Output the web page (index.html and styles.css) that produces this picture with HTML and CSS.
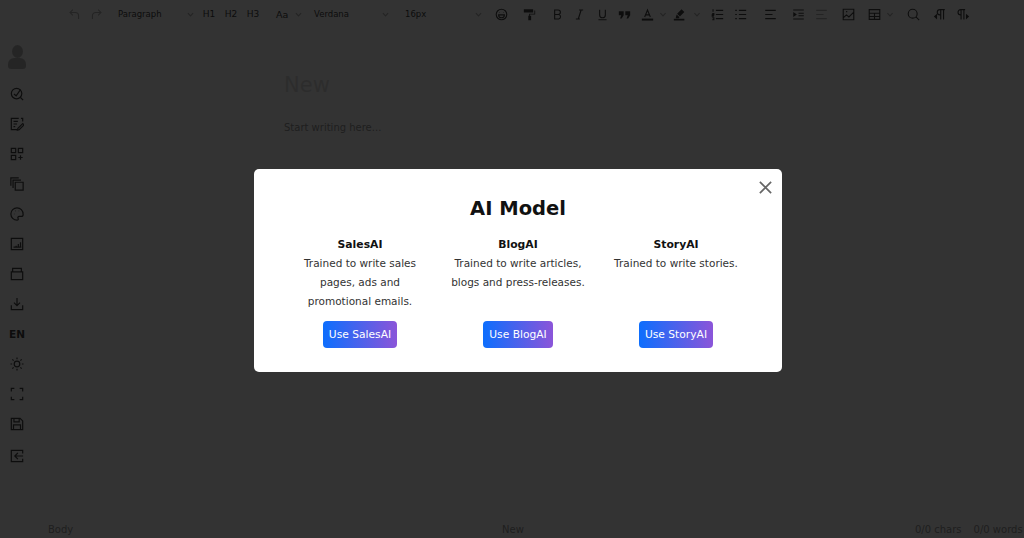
FILE: index.html
```html
<!DOCTYPE html>
<html lang="en">
<head>
  <meta charset="UTF-8">
  <meta name="viewport" content="width=device-width, initial-scale=1.0">
  <title>AI Editor</title>
  <link rel="stylesheet" href="styles.css">
</head>
<body>
  <!-- Icon sprite -->
  <svg class="sprite" xmlns="http://www.w3.org/2000/svg">
    <symbol id="i-undo" viewBox="0 0 16 16"><path d="M6 2 2.500 5.500 6 9M3 5.500h6a4 4 0 0 1 4 4v4"/></symbol>
    <symbol id="i-redo" viewBox="0 0 16 16"><path d="M10 2l3.500 3.500L10 9M13 5.500H7a4 4 0 0 0-4 4v4"/></symbol>
    <symbol id="i-chev" viewBox="0 0 8 8"><path d="M1 2.500 4 5.500 7 2.500"/></symbol>
    <symbol id="i-smile" viewBox="0 0 16 16"><circle cx="8" cy="8" r="6.500"/><path d="M4.500 8.500a3.500 3.500 0 0 0 7 0zM5.500 5.500h.5M10 5.500h.5"/></symbol>
    <symbol id="i-paint" viewBox="0 0 16 16"><path class="fill" d="M1 1.500h11.500v4H1zM13.500 3H15v5H8.500v1.500H10V15H6.500V9.500H7.500V7h6.500V3z"/></symbol>
    <symbol id="i-bold" viewBox="0 0 16 16"><path d="M4.500 2.500h4.300a2.700 2.700 0 0 1 0 5.500H4.500zM4.500 8h5a2.800 2.800 0 0 1 0 5.500h-5z"/></symbol>
    <symbol id="i-italic" viewBox="0 0 16 16"><path d="M10 2.500 6.500 13.500M7.500 2.500h5M3.500 13.500h5"/></symbol>
    <symbol id="i-under" viewBox="0 0 16 16"><path d="M4.500 2v6.500a3.500 3.500 0 0 0 7 0V2M3 14.500h10"/></symbol>
    <symbol id="i-quote" viewBox="0 0 16 16"><path class="fill" d="M1 4h6v5l-2.500 4H2.500L4 9H1zM9 4h6v5l-2.500 4h-2L12 9H9z"/></symbol>
    <symbol id="i-color" viewBox="0 0 16 16"><path d="M4.500 11 8 2.500 11.500 11M5.500 8.500h5"/><path class="fill" d="M1 13h14v2.500H1z"/></symbol>
    <symbol id="i-mark" viewBox="0 0 16 16"><path class="fill" d="M10.500 1.500 14 5l-5.500 5.500-3.500-3.500zM4.500 8 8 11.500l-1 1H3.500v-1.500zM1 13.200h13v2.300H1z"/></symbol>
    <symbol id="i-ol" viewBox="0 0 16 16"><path d="M6 3h9M6 8h9M6 13h9M2.500 1.500v3M1.500 7h2v1.500h-2V10h2M1.500 12h2v2.500h-2"/></symbol>
    <symbol id="i-ul" viewBox="0 0 16 16"><path d="M6 3h9M6 8h9M6 13h9M1.500 3h2M1.500 8h2M1.500 13h2"/></symbol>
    <symbol id="i-align" viewBox="0 0 16 16"><path d="M1.500 3h13M1.500 8h9M1.500 13h13"/></symbol>
    <symbol id="i-indent" viewBox="0 0 16 16"><path d="M1.500 2.500h13M8 6.500h6.500M8 9.500h6.500M1.500 13.500h13"/><path class="fill" d="M1.500 5 6 8l-4.500 3z"/></symbol>
    <symbol id="i-image" viewBox="0 0 16 16"><path d="M1.500 1.500h13v13h-13zM1.500 12l4-3.500 3 2.500 6-6M5 4.500h1.500"/></symbol>
    <symbol id="i-table" viewBox="0 0 16 16"><path d="M1.500 2h13v12h-13zM1.500 6.500h13M8 6.500V14M1.500 10.500h13"/></symbol>
    <symbol id="i-search" viewBox="0 0 16 16"><circle cx="7" cy="7" r="5.500"/><path d="M11 11l4 4"/></symbol>
    <symbol id="i-ltr" viewBox="0 0 16 16"><path d="M9.500 14V2M13 14V2M14.500 2H8.500a3 3 0 0 0 0 6.500h1"/><path class="fill" d="M1 10.500 5 7v7z"/></symbol>
    <symbol id="i-rtl" viewBox="0 0 16 16"><path d="M5 14V2M8.500 14V2M10 2H4.500a3 3 0 0 0 0 6.500H5"/><path class="fill" d="M15 10.500 11 7v7z"/></symbol>
    <symbol id="i-audit" viewBox="0 0 16 16"><circle cx="7.500" cy="7.500" r="6"/><path d="M12 12l3 3M4.500 8 7 10l5-7"/></symbol>
    <symbol id="i-note" viewBox="0 0 16 16"><path d="M10 1.500H1.500v13H8M14.500 5V1.500H12.500M4 5h5M4 8h4M4 11h2"/><path d="M14.500 7.500 9 13l-.5 2 2-.5 5.500-5.500z"/></symbol>
    <symbol id="i-apps" viewBox="0 0 16 16"><path d="M1.500 1.500h5v5h-5zM9.500 1.500h5v5h-5zM1.500 9.500h5v5h-5zM12 9.500v5M9.500 12h5"/></symbol>
    <symbol id="i-copy" viewBox="0 0 16 16"><path d="M6 6h9v9H6zM3.500 12.500V3.500h9M1 10V1h9"/></symbol>
    <symbol id="i-palette" viewBox="0 0 16 16"><path d="M8 1a7 7 0 1 0 0 14c1.500 0 1.800-1.200 1.200-2-.7-1 0-2.200 1.300-2.200H13c1.200 0 2-1 2-2.300C15 4 12 1 8 1z"/><path d="M4.500 8h.5M6 4.500h.5M10 4.500h.5"/></symbol>
    <symbol id="i-chart" viewBox="0 0 16 16"><path d="M1.500 1.500h13v13h-13zM7 11.500V10M9.500 11.500V8M12 11.500V6M4 11.500h9"/></symbol>
    <symbol id="i-box" viewBox="0 0 16 16"><path d="M1.500 5.500h13v9h-13zM3 5.500V1.500h10v4"/></symbol>
    <symbol id="i-down" viewBox="0 0 16 16"><path d="M8 1v9M4.500 6.500 8 10l3.500-3.500M1.500 9.500v5h13v-5"/></symbol>
    <symbol id="i-sun" viewBox="0 0 16 16"><circle cx="8" cy="8" r="3.200"/><path d="M8 .5v2M8 13.500v2M.5 8h2M13.500 8h2M2.700 2.700l1.400 1.400M11.900 11.900l1.400 1.400M2.700 13.300l1.400-1.400M11.900 4.100l1.400-1.400"/></symbol>
    <symbol id="i-full" viewBox="0 0 16 16"><path d="M1.500 5V1.500H5M11 1.500h3.500V5M14.500 11v3.500H11M5 14.500H1.500V11"/></symbol>
    <symbol id="i-save" viewBox="0 0 16 16"><path d="M1.500 1.500h10l3 3v10h-13zM4.500 1.500v4h6v-4M4 14.500V9h8v5.500"/></symbol>
    <symbol id="i-exit" viewBox="0 0 16 16"><path d="M14.500 5V1.500h-13v13h13V11M15 8H6M9 4.500 5.500 8 9 11.500"/></symbol>
  </svg>

  <div class="app">
    <div class="toolbar">
      <button class="tool faded"><svg><use href="#i-undo"/></svg></button>
      <button class="tool faded"><svg><use href="#i-redo"/></svg></button>
      <div class="select select-para">Paragraph<svg class="chev faded"><use href="#i-chev"/></svg></div>
      <button class="tool text-tool">H1</button>
      <button class="tool text-tool">H2</button>
      <button class="tool text-tool">H3</button>
      <div class="select select-case">Aa<svg class="chev faded"><use href="#i-chev"/></svg></div>
      <div class="select select-font">Verdana<svg class="chev faded"><use href="#i-chev"/></svg></div>
      <div class="select select-size">16px<svg class="chev faded"><use href="#i-chev"/></svg></div>
      <button class="tool sep-sm"><svg><use href="#i-smile"/></svg></button>
      <button class="tool sep"><svg><use href="#i-paint"/></svg></button>
      <button class="tool sep"><svg><use href="#i-bold"/></svg></button>
      <button class="tool"><svg><use href="#i-italic"/></svg></button>
      <button class="tool sep-xs"><svg><use href="#i-under"/></svg></button>
      <button class="tool"><svg><use href="#i-quote"/></svg></button>
      <button class="tool sep-xs"><svg><use href="#i-color"/></svg></button>
      <svg class="chev chev-tool faded"><use href="#i-chev"/></svg>
      <button class="tool"><svg><use href="#i-mark"/></svg></button>
      <svg class="chev chev-tool chev-wide faded"><use href="#i-chev"/></svg>
      <button class="tool sep-2"><svg><use href="#i-ol"/></svg></button>
      <button class="tool sep-xs"><svg><use href="#i-ul"/></svg></button>
      <button class="tool sep-lg"><svg><use href="#i-align"/></svg></button>
      <button class="tool sep"><svg><use href="#i-indent"/></svg></button>
      <button class="tool sep-xs faded"><svg><use href="#i-align"/></svg></button>
      <button class="tool sep-md"><svg><use href="#i-image"/></svg></button>
      <button class="tool sep-sm"><svg><use href="#i-table"/></svg></button>
      <svg class="chev chev-tool faded"><use href="#i-chev"/></svg>
      <button class="tool sep-search"><svg><use href="#i-search"/></svg></button>
      <button class="tool sep-sm"><svg><use href="#i-ltr"/></svg></button>
      <button class="tool sep-2"><svg><use href="#i-rtl"/></svg></button>
    </div>

    <div class="workspace">
      <div class="sidebar">
        <div class="avatar"><span class="avatar-head"></span><span class="avatar-body"></span></div>
        <div class="side-item"><svg><use href="#i-audit"/></svg></div>
        <div class="side-item"><svg><use href="#i-note"/></svg></div>
        <div class="side-item"><svg><use href="#i-apps"/></svg></div>
        <div class="side-item"><svg><use href="#i-copy"/></svg></div>
        <div class="side-item"><svg><use href="#i-palette"/></svg></div>
        <div class="side-item"><svg><use href="#i-chart"/></svg></div>
        <div class="side-item"><svg><use href="#i-box"/></svg></div>
        <div class="side-item"><svg><use href="#i-down"/></svg></div>
        <div class="side-item lang">EN</div>
        <div class="side-item"><svg><use href="#i-sun"/></svg></div>
        <div class="side-item"><svg><use href="#i-full"/></svg></div>
        <div class="side-item"><svg><use href="#i-save"/></svg></div>
        <div class="side-item exit"><svg><use href="#i-exit"/></svg></div>
      </div>
      <div class="editor">
        <h1>New</h1>
        <p>Start writing here...</p>
      </div>
    </div>

    <div class="statusbar">
      <span class="status-left">Body</span>
      <span class="status-mid">New</span>
      <span class="status-chars">0/0 chars</span>
      <span class="status-words">0/0 words</span>
    </div>
  </div>

  <!-- AI model popup -->
  <div class="overlay">
    <div class="popup">
      <button class="close" aria-label="Close">
        <svg viewBox="0 0 16 16"><path d="M2 2l12 12M14 2 2 14"/></svg>
      </button>
      <h2>AI Model</h2>
      <div class="models">
        <div class="model">
          <h3>SalesAI</h3>
          <p>Trained to write sales pages, ads and promotional emails.</p>
          <button class="use-btn">Use SalesAI</button>
        </div>
        <div class="model">
          <h3>BlogAI</h3>
          <p>Trained to write articles, blogs and press-releases.</p>
          <button class="use-btn">Use BlogAI</button>
        </div>
        <div class="model">
          <h3>StoryAI</h3>
          <p>Trained to write stories.</p>
          <button class="use-btn">Use StoryAI</button>
        </div>
      </div>
    </div>
  </div>
</body>
</html>
```

FILE: styles.css
```css
* {
  box-sizing: border-box;
}

body {
  font-family: "DejaVu Sans", Verdana, sans-serif;
  background-color: #fff;
  color: #555;
  margin: 0;
  height: 538px;
  overflow: hidden;
}

button {
  font-family: inherit;
  background: none;
  border: none;
  padding: 0;
  color: inherit;
}

.sprite {
  display: none;
}

symbol path,
symbol circle {
  fill: none;
  stroke: currentColor;
  stroke-width: 1.4;
}

symbol path.fill {
  fill: currentColor;
  stroke: none;
}

.app {
  display: flex;
  flex-direction: column;
  height: 538px;
}

/* Top toolbar */
.toolbar {
  display: flex;
  align-items: center;
  height: 28px;
  padding-left: 63px;
  color: #444;
}

.tool {
  display: flex;
  align-items: center;
  justify-content: center;
  width: 22px;
  height: 22px;
  flex: none;
}

.tool svg {
  width: 13px;
  height: 13px;
}

.text-tool {
  font-size: 9px;
}

.faded {
  opacity: 0.4;
}

.sep-xs {
  margin-left: 1px;
}

.sep-2 {
  margin-left: 2px;
}

.sep-sm {
  margin-left: 4px;
}

.sep-md {
  margin-left: 5px;
}

.sep {
  margin-left: 6px;
}

.sep-search {
  margin-left: 7px;
}

.sep-lg {
  margin-left: 8px;
}

.select {
  display: flex;
  align-items: center;
  justify-content: space-between;
  font-size: 8.5px;
  flex: none;
}

.select-para {
  width: 87px;
  margin-left: 4px;
  padding: 0 4px 0 7px;
}

.select-case {
  width: 43px;
  padding: 0 5px 0 12px;
  font-size: 9.5px;
}

.select-font {
  width: 87px;
  padding: 0 5px 0 7px;
}

.select-size {
  width: 88px;
  margin-left: 4px;
  padding: 0 4px 0 7px;
}

.chev {
  width: 7px;
  height: 7px;
  flex: none;
}

.chev-tool {
  width: 10px;
  padding: 0 1px;
}

.chev-wide {
  width: 14px;
  padding: 0 3px;
}

/* Side menu and editor */
.workspace {
  display: flex;
  flex: 1;
  min-height: 0;
}

.sidebar {
  width: 34px;
  display: flex;
  flex-direction: column;
  align-items: center;
  padding-top: 17px;
  color: #444;
}

.avatar {
  display: flex;
  flex-direction: column;
  align-items: center;
  width: 18px;
  height: 24px;
  margin-bottom: 10px;
  opacity: 0.4;
}

.avatar-head {
  width: 11px;
  height: 13px;
  border-radius: 50%;
  background-color: #555;
}

.avatar-body {
  width: 18px;
  height: 11px;
  border-radius: 6px 6px 3px 3px;
  background-color: #555;
}

.side-item {
  display: flex;
  align-items: center;
  justify-content: center;
  height: 30px;
  width: 100%;
  flex: none;
}

.side-item svg {
  width: 14px;
  height: 14px;
}

.lang {
  font-size: 10.5px;
  font-weight: bold;
}

.exit {
  margin-top: 2px;
}

.editor {
  flex: 1;
  padding: 45px 0 0 250px;
}

.editor h1 {
  font-size: 21px;
  font-weight: normal;
  color: #ddd;
  margin: 0 0 25px;
}

.editor p {
  font-size: 10px;
  color: #999;
  margin: 0;
}

/* Bottom status bar */
.statusbar {
  display: flex;
  align-items: center;
  height: 18px;
  font-size: 10px;
  color: #999;
  white-space: nowrap;
}

.status-left {
  margin-left: 48px;
  width: 454px;
  flex: none;
}

.status-mid {
  width: 413px;
  flex: none;
}

.status-chars {
  margin-right: 12px;
  flex: none;
}

.status-words {
  flex: none;
}

/* Popup overlay */
.overlay {
  position: fixed;
  top: 0;
  left: 0;
  width: 100%;
  height: 100%;
  background-color: rgba(0, 0, 0, 0.8);
  z-index: 1000;
}

.popup {
  position: absolute;
  left: 254px;
  top: 169px;
  width: 528px;
  height: 203px;
  padding-top: 27px;
  background-color: #fff;
  border-radius: 5px;
  color: #333;
  text-align: center;
}

.close {
  position: absolute;
  top: 11px;
  right: 9px;
  width: 15px;
  height: 15px;
  color: #666;
}

.close svg {
  display: block;
  width: 15px;
  height: 15px;
  fill: none;
  stroke: currentColor;
  stroke-width: 1.8;
}

.popup h2 {
  font-size: 19.500px;
  line-height: 25px;
  color: #111;
  margin: 0 0 14px;
}

.models {
  display: flex;
  justify-content: center;
  gap: 18px;
}

.model {
  display: flex;
  flex-direction: column;
  align-items: center;
  width: 140px;
}

.model h3 {
  font-size: 10.800px;
  line-height: 19px;
  margin: 0;
  color: #111;
}

.model p {
  font-size: 10.500px;
  line-height: 19px;
  margin: 0 0 10px;
  height: 57px;
}

.use-btn {
  height: 27px;
  padding: 0 6px;
  font-size: 10.700px;
  color: #fff;
  border-radius: 4px;
  background: linear-gradient(90deg, #0d6efd, #8b55d9);
}
```
